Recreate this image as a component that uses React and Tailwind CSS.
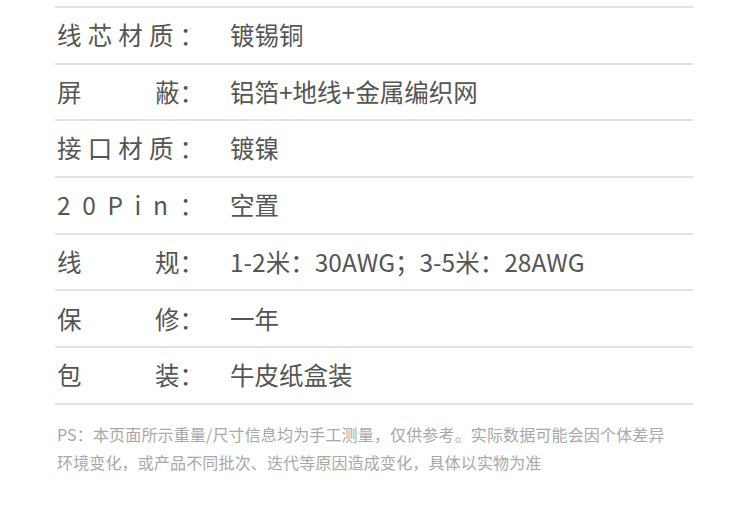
const rows = [
  { label: ['线', '芯', '材', '质', '：'], value: '镀锡铜' },
  { label: ['屏', '蔽：'], value: '铝箔+地线+金属编织网' },
  { label: ['接', '口', '材', '质', '：'], value: '镀镍' },
  { label: ['2', '0', 'P', 'i', 'n', '：'], value: '空置' },
  { label: ['线', '规：'], value: '1-2米：30AWG；3-5米：28AWG' },
  { label: ['保', '修：'], value: '一年' },
  { label: ['包', '装：'], value: '牛皮纸盒装' },
]

export default function App() {
  return (
    <div
      className="w-[750px] h-[531px] bg-white overflow-hidden pt-[6px]"
      style={{ fontFamily: '"Noto Sans CJK SC", "Noto Sans", sans-serif' }}
    >
      <div className="ml-[55px] w-[638px]">
        <div className="border-t-2 border-[#e2e2e2]">
          {rows.map((r, i) => (
            <div
              key={i}
              className="h-[56.7px] border-b-2 border-[#e2e2e2] flex items-center text-[24.5px] leading-none text-[#555555]"
            >
              <div className="ml-[2px] w-[147px] flex justify-between">
                {r.label.map((c, j) => (
                  <span key={j}>{c}</span>
                ))}
              </div>
              <div className="ml-[26px]">{r.value}</div>
            </div>
          ))}
        </div>
      </div>

      <div className="ml-[57px] mt-[15px] w-[660px] text-[16px] leading-[28px] tracking-[0.15px] text-[#a8a8a8]">
        <p>PS：本页面所示重量/尺寸信息均为手工测量，仅供参考。实际数据可能会因个体差异</p>
        <p>环境变化，或产品不同批次、迭代等原因造成变化，具体以实物为准</p>
      </div>
    </div>
  )
}
